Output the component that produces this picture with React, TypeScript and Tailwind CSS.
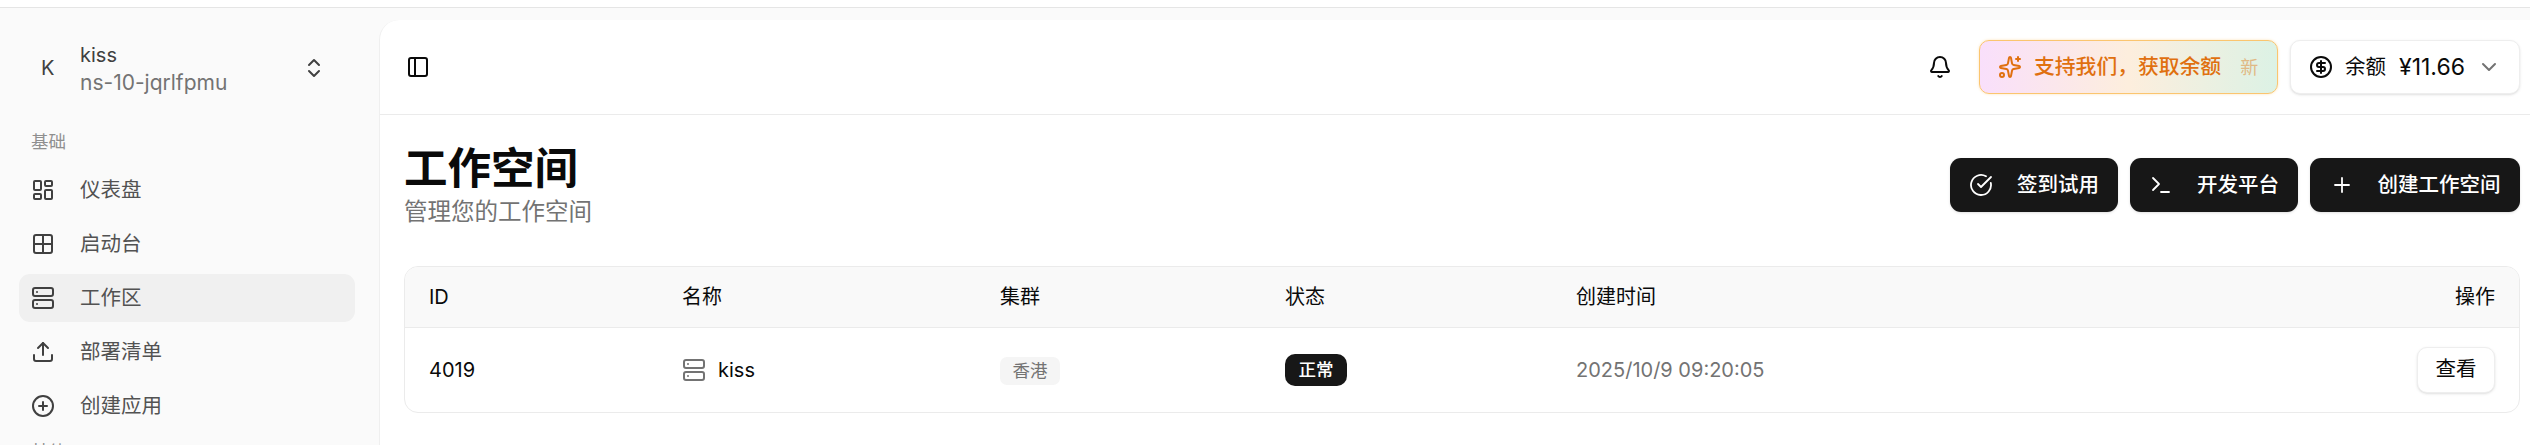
import { Bell, ChevronDown, ChevronsUpDown, CircleCheckBig, CircleDollarSign, CirclePlus, Grid2x2, LayoutDashboard, PanelLeft, Plus, Server, Sparkles, Terminal, Upload } from "lucide-react";

const nav = [
  { label: "仪表盘", Icon: LayoutDashboard },
  { label: "启动台", Icon: Grid2x2 },
  { label: "工作区", Icon: Server, active: true },
  { label: "部署清单", Icon: Upload },
  { label: "创建应用", Icon: CirclePlus },
];

function DarkButton({ Icon, label, width }: { Icon: typeof Plus; label: string; width: string }) {
  return (
    <button className={`flex h-[54px] items-center justify-center gap-[24px] rounded-[11px] bg-[#171717] text-[20.5px] font-medium text-white shadow-sm ${width}`}>
      <Icon size={24} strokeWidth={1.8} />
      {label}
    </button>
  );
}

export default function App() {
  return (
    <div className="flex h-[445px] w-[2530px] flex-col overflow-hidden bg-[#fafafa] font-['Inter','Noto_Sans_CJK_SC',sans-serif] text-[#0a0a0a]">
      <div className="h-2 shrink-0 border-b border-[#e5e5e5] bg-white" />
      <div className="flex min-h-0 flex-1">
        <aside className="w-[379px] shrink-0 pl-[19px] pr-[24px]">
          <div className="flex h-[96px] items-center pt-[24px]">
            <span className="w-[61px] pl-[22px] text-[20px] text-[#404040]">K</span>
            <div className="mt-[2px] flex-1 leading-[28px]">
              <div className="text-[20px] text-[#404040]">kiss</div>
              <div className="text-[21px] text-[#737373]">ns-10-jqrlfpmu</div>
            </div>
            <ChevronsUpDown size={24} strokeWidth={2} className="mr-[29px] text-[#404040]" />
          </div>
          <div className="mt-[24px] flex h-[28px] items-center pl-[12px] text-[17.5px] text-[#8f8f8f]">基础</div>
          <nav className="mt-[10px] flex flex-col gap-[6px]">
            {nav.map(({ label, Icon, active }) => (
              <div key={label} className={`flex h-[48px] items-center gap-[25px] rounded-[11px] pl-[12px] text-[20.5px] text-[#525252] ${active ? "bg-[#f0f0f0]" : ""}`}>
                <Icon size={24} strokeWidth={2} className="text-[#404040]" />
                {label}
              </div>
            ))}
          </nav>
          <div className="mt-[8px] flex h-[28px] items-center pl-[12px] text-[17.5px] text-[#8f8f8f]">其他</div>
        </aside>
        <main className="mt-3 min-w-0 flex-1 rounded-tl-[20px] border-l border-[#efefef] bg-white">
          <header className="flex h-[95px] items-center justify-between border-b border-[#ebebeb] pl-[26px] pr-[10px]">
            <PanelLeft size={24} strokeWidth={2} />
            <div className="flex items-center">
              <Bell size={24} strokeWidth={2} className="mr-[27px]" />
              <button className="mr-[12px] flex h-[54px] w-[299px] items-center rounded-[10px] border border-[#fbc56f] bg-[linear-gradient(90deg,#f9dffb,#fdeedd_50%,#dcf2e5)] pl-[18px] text-[20.8px] font-medium text-[#e0700f] shadow-[0_0_3px_#fde3b8]">
                <Sparkles size={24} strokeWidth={2} />
                <span className="ml-[12px]">支持我们，获取余额</span>
                <span className="ml-[19px] text-[18px] font-normal text-[#e0b985]">新</span>
              </button>
              <button className="flex h-[54px] w-[230px] items-center rounded-[10px] border border-[#eeeeee] bg-white pl-[18px] text-[20.5px] shadow-sm">
                <CircleDollarSign size={24} strokeWidth={2} />
                <span className="ml-[12px]">余额</span>
                <span className="ml-[13px] text-[23px]">¥11.66</span>
                <ChevronDown size={24} strokeWidth={2} className="ml-[12px] text-[#737373]" />
              </button>
            </div>
          </header>
          <section className="pl-[24px] pr-[10px]">
            <div className="flex h-[151px] items-start justify-between pt-[27px]">
              <div>
                <h1 className="text-[43.5px] leading-[53px] font-bold">工作空间</h1>
                <p className="text-[23.5px] leading-[33px] text-[#737373]">管理您的工作空间</p>
              </div>
              <div className="mt-[16px] flex gap-[12px]">
                <DarkButton Icon={CircleCheckBig} label="签到试用" width="w-[168px]" />
                <DarkButton Icon={Terminal} label="开发平台" width="w-[168px]" />
                <DarkButton Icon={Plus} label="创建工作空间" width="w-[210px]" />
              </div>
            </div>
            <div className="overflow-hidden rounded-[14px] border border-[#ebebeb]">
              <table className="w-full table-fixed text-left text-[20px]">
                <thead className="bg-[#f9f9f9]">
                  <tr className="h-[60px] border-b border-[#ebebeb]">
                    <th className="w-[253px] pl-[24px] font-normal">ID</th>
                    <th className="w-[318px] pl-[24px] font-normal">名称</th>
                    <th className="w-[285px] pl-[24px] font-normal">集群</th>
                    <th className="w-[291px] pl-[24px] font-normal">状态</th>
                    <th className="pl-[24px] font-normal">创建时间</th>
                    <th className="w-[200px] pr-[24px] text-right font-normal">操作</th>
                  </tr>
                </thead>
                <tbody>
                  <tr className="h-[85px]">
                    <td className="pl-[24px]">4019</td>
                    <td className="pl-[24px]">
                      <div className="flex items-center gap-[12px]">
                        <Server size={24} strokeWidth={2} className="text-[#737373]" />
                        kiss
                      </div>
                    </td>
                    <td className="pl-[24px]">
                      <span className="inline-flex h-[28px] w-[60px] items-center justify-center rounded-[7px] bg-[#f5f5f5] text-[17.5px] text-[#737373]">香港</span>
                    </td>
                    <td className="pl-[24px]">
                      <span className="inline-flex h-[32px] w-[62px] items-center justify-center rounded-[10px] bg-[#171717] text-[17.5px] font-medium text-white">正常</span>
                    </td>
                    <td className="pl-[24px] text-[#737373]">2025/10/9 09:20:05</td>
                    <td className="pr-[24px] text-right">
                      <button className="h-[46px] w-[78px] rounded-[10px] border border-[#eeeeee] bg-white text-[20.5px] shadow-sm">查看</button>
                    </td>
                  </tr>
                </tbody>
              </table>
            </div>
          </section>
        </main>
      </div>
    </div>
  );
}
